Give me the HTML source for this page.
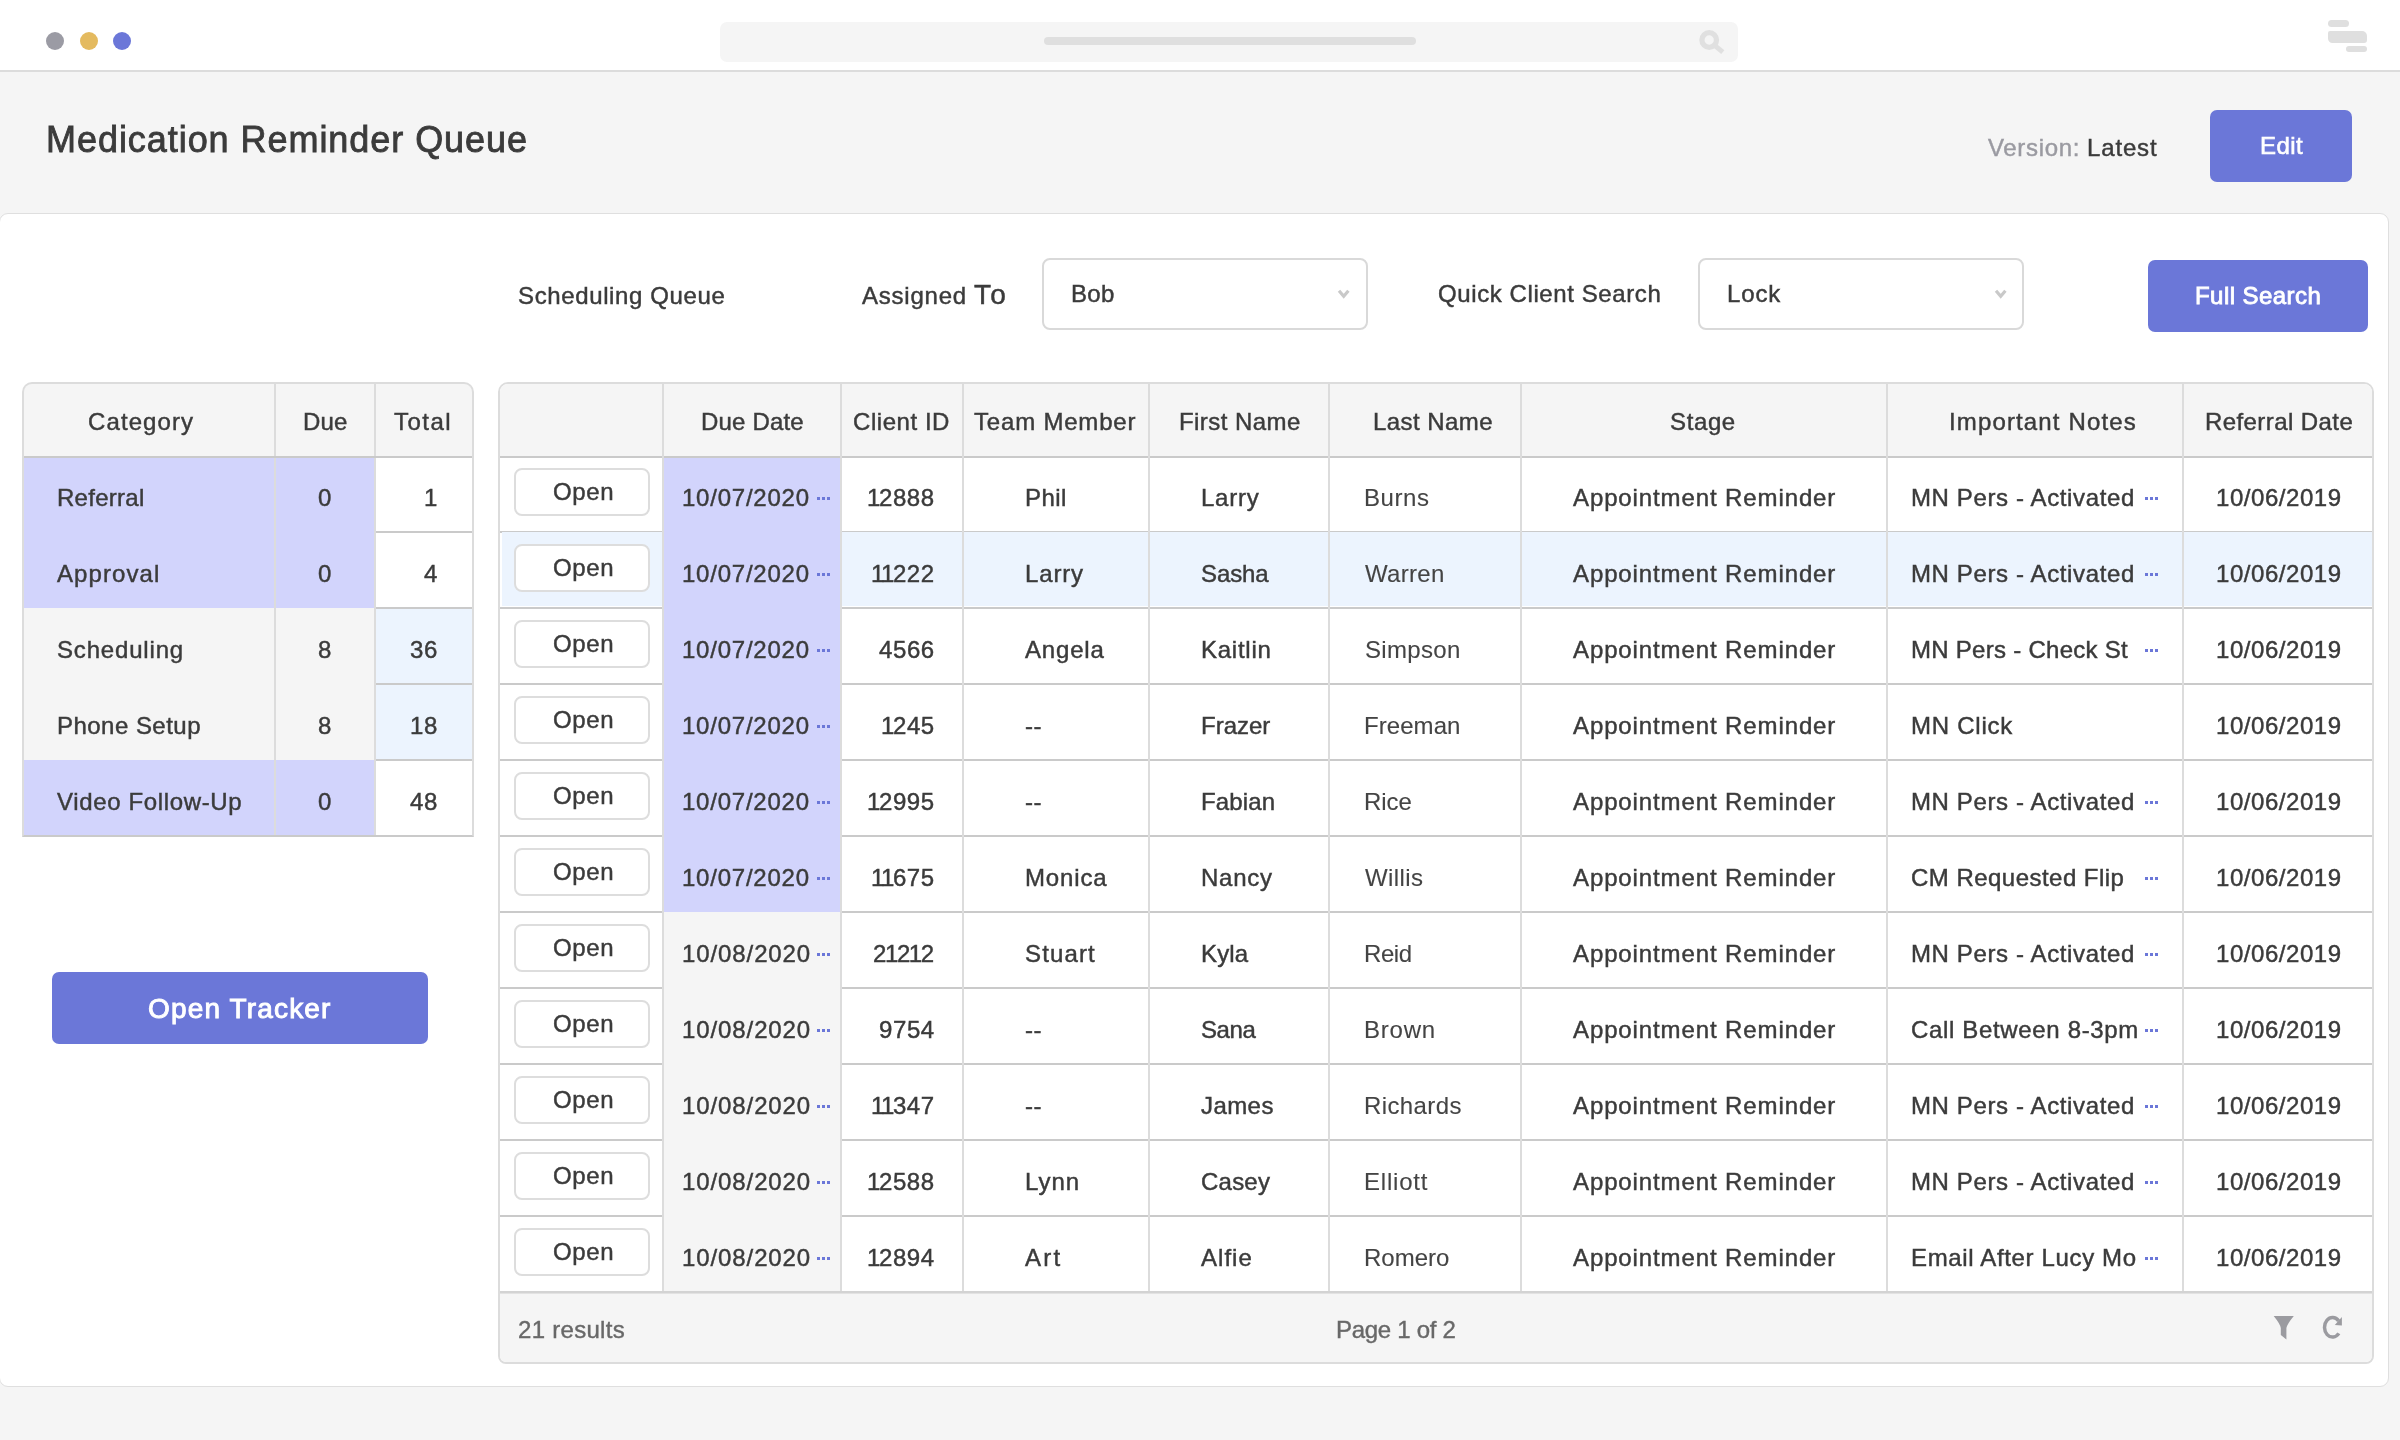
<!DOCTYPE html>
<html><head><meta charset="utf-8"><title>Medication Reminder Queue</title>
<style>
html,body{margin:0;padding:0}
body{width:2400px;height:1440px;position:relative;overflow:hidden;background:#f5f5f5;font-family:"Liberation Sans",sans-serif}
body>div,body>span,body>svg{position:absolute;display:block}
.t{white-space:nowrap;font-weight:400;will-change:transform}
</style></head><body>
<div style="left:0px;top:0px;width:2400px;height:70px;background:#fff;"></div>
<div style="left:0px;top:70px;width:2400px;height:2px;background:#dcdcdc;"></div>
<div style="left:46px;top:32px;width:18px;height:18px;background:#9b9ba4;border-radius:50%;"></div>
<div style="left:79.5px;top:32px;width:18px;height:18px;background:#e4ba5f;border-radius:50%;"></div>
<div style="left:113px;top:32px;width:18px;height:18px;background:#6b77d8;border-radius:50%;"></div>
<div style="left:720px;top:22px;width:1018px;height:40px;background:#f5f5f5;border-radius:7px;"></div>
<div style="left:1044px;top:37px;width:372px;height:8px;background:#dfdfdf;border-radius:4px;"></div>
<svg style="left:1694px;top:26px" width="36" height="32" viewBox="0 0 36 32"><circle cx="15.2" cy="14" r="7.3" fill="none" stroke="#e0e0e0" stroke-width="5.3"/><path d="M20.6 19.4 L28.8 26.2" stroke="#e0e0e0" stroke-width="5" stroke-linecap="butt"/></svg>
<div style="left:2328px;top:20px;width:21px;height:7px;background:#dfdfdf;border-radius:3.5px;"></div>
<div style="left:2328px;top:30.5px;width:38.5px;height:12.5px;background:#dfdfdf;border-radius:2px 5px 3px 4.5px;"></div>
<div style="left:2345.5px;top:46.3px;width:21px;height:5.8px;background:#dfdfdf;border-radius:2.9px;"></div>
<span class="t" style="left:46.00px;top:122px;font-size:36px;line-height:36px;letter-spacing:0.950px;color:#3b3b3b;-webkit-text-stroke:0.85px #3b3b3b;">Medication Reminder Queue</span>
<span class="t" style="left:1988.00px;top:136px;font-size:24px;line-height:24px;letter-spacing:0.657px;color:#9a9aa1;-webkit-text-stroke:0.45px #9a9aa1;">Version:</span>
<span class="t" style="left:2087.20px;top:136px;font-size:24px;line-height:24px;letter-spacing:0.840px;color:#3b3b3b;-webkit-text-stroke:0.45px #3b3b3b;">Latest</span>
<div style="left:2210px;top:110px;width:142px;height:72px;background:#6b77d8;border-radius:7px;"></div>
<span class="t" style="left:2260.10px;top:133.5px;font-size:24px;line-height:24px;letter-spacing:0.433px;color:#fff;-webkit-text-stroke:0.6px #fff;">Edit</span>
<div style="left:-1px;top:213px;width:2388px;height:1172px;background:#fff;border:1px solid #dfdfdf;border-radius:9px;box-sizing:content-box"></div>
<span class="t" style="left:518.40px;top:284.0px;font-size:24px;line-height:24px;letter-spacing:0.627px;color:#3b3b3b;-webkit-text-stroke:0.45px #3b3b3b;">Scheduling Queue</span>
<span class="t" style="left:862.20px;top:284px;font-size:24px;line-height:24px;letter-spacing:0.771px;color:#3b3b3b;-webkit-text-stroke:0.45px #3b3b3b;">Assigned</span>
<span class="t" style="left:973.60px;top:281px;font-size:28px;line-height:28px;letter-spacing:2.200px;color:#3b3b3b;-webkit-text-stroke:0.5px #3b3b3b;">To</span>
<div style="left:1042px;top:258px;width:322px;height:68px;background:#fff;border:2px solid #d9d9d9;border-radius:8px"></div>
<span class="t" style="left:1071.00px;top:282px;font-size:24px;line-height:24px;letter-spacing:0.300px;color:#3b3b3b;-webkit-text-stroke:0.45px #3b3b3b;">Bob</span>
<svg style="left:1336.3px;top:286px" width="16" height="16" viewBox="0 0 16 16"><path d="M3 4.8 L7.7 10.2 L12.4 4.8" fill="none" stroke="#c9c9c9" stroke-width="3.2" stroke-linejoin="miter"/></svg>
<span class="t" style="left:1438.30px;top:282px;font-size:24px;line-height:24px;letter-spacing:0.594px;color:#3b3b3b;-webkit-text-stroke:0.45px #3b3b3b;">Quick Client Search</span>
<div style="left:1698px;top:258px;width:322px;height:68px;background:#fff;border:2px solid #d9d9d9;border-radius:8px"></div>
<span class="t" style="left:1726.90px;top:282px;font-size:24px;line-height:24px;letter-spacing:0.867px;color:#3b3b3b;-webkit-text-stroke:0.45px #3b3b3b;">Lock</span>
<svg style="left:1992.5px;top:286px" width="16" height="16" viewBox="0 0 16 16"><path d="M3 4.8 L7.7 10.2 L12.4 4.8" fill="none" stroke="#c9c9c9" stroke-width="3.2" stroke-linejoin="miter"/></svg>
<div style="left:2148px;top:260px;width:220px;height:72px;background:#6b77d8;border-radius:7px;"></div>
<span class="t" style="left:2195.20px;top:284px;font-size:24px;line-height:24px;letter-spacing:0.440px;color:#fff;-webkit-text-stroke:0.85px #fff;">Full Search</span>
<div style="left:22px;top:382px;width:448px;height:451px;background:#f5f5f5;border:2px solid #dcdcdc;border-bottom:2px solid #cacaca;border-radius:10px 10px 0 0"></div>
<div style="left:24px;top:458px;width:350px;height:150px;background:#d2d4fc;"></div>
<div style="left:24px;top:760px;width:350px;height:75px;background:#d2d4fc;"></div>
<div style="left:376px;top:458px;width:96px;height:73px;background:#fff;"></div>
<div style="left:376px;top:531px;width:96px;height:2px;background:#cacaca;"></div>
<div style="left:376px;top:533px;width:96px;height:74px;background:#fff;"></div>
<div style="left:376px;top:607px;width:96px;height:2px;background:#cacaca;"></div>
<div style="left:376px;top:609px;width:96px;height:74px;background:#ecf4fe;"></div>
<div style="left:376px;top:683px;width:96px;height:2px;background:#cacaca;"></div>
<div style="left:376px;top:685px;width:96px;height:74px;background:#ecf4fe;"></div>
<div style="left:376px;top:759px;width:96px;height:2px;background:#cacaca;"></div>
<div style="left:376px;top:761px;width:96px;height:74px;background:#fff;"></div>
<div style="left:274px;top:384px;width:2px;height:451px;background:#dcdcdc;"></div>
<div style="left:374px;top:384px;width:2px;height:451px;background:#dcdcdc;"></div>
<div style="left:24px;top:456px;width:448px;height:2px;background:#cacaca;"></div>
<span class="t" style="left:88.20px;top:410px;font-size:24px;line-height:24px;letter-spacing:1.100px;color:#3b3b3b;-webkit-text-stroke:0.45px #3b3b3b;">Category</span>
<span class="t" style="left:302.60px;top:410px;font-size:24px;line-height:24px;letter-spacing:0.150px;color:#3b3b3b;-webkit-text-stroke:0.45px #3b3b3b;">Due</span>
<span class="t" style="left:393.60px;top:410px;font-size:24px;line-height:24px;letter-spacing:1.500px;color:#3b3b3b;-webkit-text-stroke:0.45px #3b3b3b;">Total</span>
<span class="t" style="left:56.60px;top:486px;font-size:24px;line-height:24px;letter-spacing:0.271px;color:#3b3b3b;-webkit-text-stroke:0.45px #3b3b3b;">Referral</span>
<span class="t" style="left:318.35px;top:486px;font-size:24px;line-height:24px;letter-spacing:0.620px;color:#3b3b3b;-webkit-text-stroke:0.45px #3b3b3b;">0</span>
<span class="t" style="left:424.00px;top:486px;font-size:24px;line-height:24px;letter-spacing:0.620px;color:#3b3b3b;-webkit-text-stroke:0.45px #3b3b3b;">1</span>
<span class="t" style="left:56.60px;top:562px;font-size:24px;line-height:24px;letter-spacing:1.071px;color:#3b3b3b;-webkit-text-stroke:0.45px #3b3b3b;">Approval</span>
<span class="t" style="left:318.35px;top:562px;font-size:24px;line-height:24px;letter-spacing:0.620px;color:#3b3b3b;-webkit-text-stroke:0.45px #3b3b3b;">0</span>
<span class="t" style="left:424.00px;top:562px;font-size:24px;line-height:24px;letter-spacing:0.620px;color:#3b3b3b;-webkit-text-stroke:0.45px #3b3b3b;">4</span>
<span class="t" style="left:56.60px;top:638px;font-size:24px;line-height:24px;letter-spacing:0.822px;color:#3b3b3b;-webkit-text-stroke:0.45px #3b3b3b;">Scheduling</span>
<span class="t" style="left:318.35px;top:638px;font-size:24px;line-height:24px;letter-spacing:0.620px;color:#3b3b3b;-webkit-text-stroke:0.45px #3b3b3b;">8</span>
<span class="t" style="left:409.98px;top:638px;font-size:24px;line-height:24px;letter-spacing:0.620px;color:#3b3b3b;-webkit-text-stroke:0.45px #3b3b3b;">36</span>
<span class="t" style="left:56.60px;top:714px;font-size:24px;line-height:24px;letter-spacing:0.470px;color:#3b3b3b;-webkit-text-stroke:0.45px #3b3b3b;">Phone Setup</span>
<span class="t" style="left:318.35px;top:714px;font-size:24px;line-height:24px;letter-spacing:0.620px;color:#3b3b3b;-webkit-text-stroke:0.45px #3b3b3b;">8</span>
<span class="t" style="left:409.98px;top:714px;font-size:24px;line-height:24px;letter-spacing:0.620px;color:#3b3b3b;-webkit-text-stroke:0.45px #3b3b3b;">18</span>
<span class="t" style="left:56.60px;top:790px;font-size:24px;line-height:24px;letter-spacing:0.643px;color:#3b3b3b;-webkit-text-stroke:0.45px #3b3b3b;">Video Follow-Up</span>
<span class="t" style="left:318.35px;top:790px;font-size:24px;line-height:24px;letter-spacing:0.620px;color:#3b3b3b;-webkit-text-stroke:0.45px #3b3b3b;">0</span>
<span class="t" style="left:409.98px;top:790px;font-size:24px;line-height:24px;letter-spacing:0.620px;color:#3b3b3b;-webkit-text-stroke:0.45px #3b3b3b;">48</span>
<div style="left:52px;top:972px;width:376px;height:72px;background:#6b77d8;border-radius:7px;"></div>
<span class="t" style="left:148.00px;top:995px;font-size:28px;line-height:28px;letter-spacing:1.155px;color:#fff;-webkit-text-stroke:0.95px #fff;">Open Tracker</span>
<div style="left:498px;top:382px;width:1872px;height:978px;background:#fff;border:2px solid #dcdcdc;border-radius:10px 10px 8px 8px"></div>
<div style="left:500px;top:384px;width:1872px;height:72px;background:#f5f5f5;border-radius:8px 8px 0 0;"></div>
<div style="left:500px;top:456px;width:1872px;height:2px;background:#cacaca;"></div>
<div style="left:500px;top:531px;width:1872px;height:2px;background:#cacaca;"></div>
<div style="left:500px;top:607px;width:1872px;height:2px;background:#cacaca;"></div>
<div style="left:500px;top:683px;width:1872px;height:2px;background:#cacaca;"></div>
<div style="left:500px;top:759px;width:1872px;height:2px;background:#cacaca;"></div>
<div style="left:500px;top:835px;width:1872px;height:2px;background:#cacaca;"></div>
<div style="left:500px;top:911px;width:1872px;height:2px;background:#cacaca;"></div>
<div style="left:500px;top:987px;width:1872px;height:2px;background:#cacaca;"></div>
<div style="left:500px;top:1063px;width:1872px;height:2px;background:#cacaca;"></div>
<div style="left:500px;top:1139px;width:1872px;height:2px;background:#cacaca;"></div>
<div style="left:500px;top:1215px;width:1872px;height:2px;background:#cacaca;"></div>
<div style="left:500px;top:1291px;width:1872px;height:2px;background:#cacaca;"></div>
<div style="left:500px;top:1291px;width:1872px;height:2px;background:#d3d3d3;"></div>
<div style="left:500px;top:1293px;width:1872px;height:1px;background:#e2e2e2;"></div>
<div style="left:502px;top:532px;width:1870px;height:74px;background:#ecf4fe;"></div>
<div style="left:664px;top:458px;width:176px;height:454px;background:#d2d4fc;"></div>
<div style="left:664px;top:912px;width:176px;height:379px;background:#f5f5f5;"></div>
<div style="left:500px;top:1294px;width:1872px;height:68px;background:#f5f5f5;border-radius:0 0 6px 6px;"></div>
<div style="left:662px;top:384px;width:2px;height:907px;background:#dcdcdc;"></div>
<div style="left:840px;top:384px;width:2px;height:907px;background:#dcdcdc;"></div>
<div style="left:962px;top:384px;width:2px;height:907px;background:#dcdcdc;"></div>
<div style="left:1148px;top:384px;width:2px;height:907px;background:#dcdcdc;"></div>
<div style="left:1328px;top:384px;width:2px;height:907px;background:#dcdcdc;"></div>
<div style="left:1520px;top:384px;width:2px;height:907px;background:#dcdcdc;"></div>
<div style="left:1886px;top:384px;width:2px;height:907px;background:#dcdcdc;"></div>
<div style="left:2182px;top:384px;width:2px;height:907px;background:#dcdcdc;"></div>
<span class="t" style="left:700.90px;top:410px;font-size:24px;line-height:24px;letter-spacing:0.186px;color:#3b3b3b;-webkit-text-stroke:0.45px #3b3b3b;">Due Date</span>
<span class="t" style="left:852.60px;top:410px;font-size:24px;line-height:24px;letter-spacing:0.550px;color:#3b3b3b;-webkit-text-stroke:0.45px #3b3b3b;">Client ID</span>
<span class="t" style="left:973.80px;top:410px;font-size:24px;line-height:24px;letter-spacing:0.810px;color:#3b3b3b;-webkit-text-stroke:0.45px #3b3b3b;">Team Member</span>
<span class="t" style="left:1178.80px;top:410px;font-size:24px;line-height:24px;letter-spacing:0.433px;color:#3b3b3b;-webkit-text-stroke:0.45px #3b3b3b;">First Name</span>
<span class="t" style="left:1372.60px;top:410px;font-size:24px;line-height:24px;letter-spacing:0.450px;color:#3b3b3b;-webkit-text-stroke:0.45px #3b3b3b;">Last Name</span>
<span class="t" style="left:1670.40px;top:410px;font-size:24px;line-height:24px;letter-spacing:0.625px;color:#3b3b3b;-webkit-text-stroke:0.45px #3b3b3b;">Stage</span>
<span class="t" style="left:1949.20px;top:410px;font-size:24px;line-height:24px;letter-spacing:1.143px;color:#3b3b3b;-webkit-text-stroke:0.45px #3b3b3b;">Important Notes</span>
<span class="t" style="left:2204.60px;top:410px;font-size:24px;line-height:24px;letter-spacing:0.417px;color:#3b3b3b;-webkit-text-stroke:0.45px #3b3b3b;">Referral Date</span>
<div style="left:514px;top:468px;width:132px;height:44px;background:#fff;border:2px solid #dddddd;border-radius:8px"></div>
<span class="t" style="left:552.60px;top:480px;font-size:24px;line-height:24px;letter-spacing:0.667px;color:#3b3b3b;-webkit-text-stroke:0.45px #3b3b3b;">Open</span>
<span class="t" style="left:681.60px;top:486px;font-size:24px;line-height:24px;letter-spacing:0.767px;color:#3b3b3b;-webkit-text-stroke:0.45px #3b3b3b;">10/07/2020</span>
<div style="left:817px;top:497px;width:3px;height:3px;background:#6b77d8;"></div>
<div style="left:822px;top:497px;width:3px;height:3px;background:#6b77d8;"></div>
<div style="left:827px;top:497px;width:3px;height:3px;background:#6b77d8;"></div>
<span class="t" style="left:868.71px;top:486px;font-size:24px;line-height:24px;letter-spacing:0.6px;color:#3b3b3b;-webkit-text-stroke:0.45px #3b3b3b;"><span style="margin:0 -2.0px">1</span>2888</span>
<span class="t" style="left:1024.60px;top:486px;font-size:24px;line-height:24px;letter-spacing:0.400px;color:#3b3b3b;-webkit-text-stroke:0.45px #3b3b3b;">Phil</span>
<span class="t" style="left:1200.90px;top:486px;font-size:24px;line-height:24px;letter-spacing:0.750px;color:#3b3b3b;-webkit-text-stroke:0.45px #3b3b3b;">Larry</span>
<span class="t" style="left:1363.90px;top:486px;font-size:24px;line-height:24px;letter-spacing:0.550px;color:#444;-webkit-text-stroke:0.1px #444;">Burns</span>
<span class="t" style="left:1572.90px;top:486px;font-size:24px;line-height:24px;letter-spacing:0.889px;color:#3b3b3b;-webkit-text-stroke:0.45px #3b3b3b;">Appointment Reminder</span>
<span class="t" style="left:1910.60px;top:486px;font-size:24px;line-height:24px;letter-spacing:0.622px;color:#3b3b3b;-webkit-text-stroke:0.45px #3b3b3b;">MN Pers - Activated</span>
<div style="left:2145px;top:497px;width:3px;height:3px;background:#6b77d8;"></div>
<div style="left:2150px;top:497px;width:3px;height:3px;background:#6b77d8;"></div>
<div style="left:2155px;top:497px;width:3px;height:3px;background:#6b77d8;"></div>
<span class="t" style="left:2215.60px;top:486px;font-size:24px;line-height:24px;letter-spacing:0.556px;color:#3b3b3b;-webkit-text-stroke:0.45px #3b3b3b;">10/06/2019</span>
<div style="left:514px;top:544px;width:132px;height:44px;background:#fff;border:2px solid #dddddd;border-radius:8px"></div>
<span class="t" style="left:552.60px;top:556px;font-size:24px;line-height:24px;letter-spacing:0.667px;color:#3b3b3b;-webkit-text-stroke:0.45px #3b3b3b;">Open</span>
<span class="t" style="left:681.60px;top:562px;font-size:24px;line-height:24px;letter-spacing:0.767px;color:#3b3b3b;-webkit-text-stroke:0.45px #3b3b3b;">10/07/2020</span>
<div style="left:817px;top:573px;width:3px;height:3px;background:#6b77d8;"></div>
<div style="left:822px;top:573px;width:3px;height:3px;background:#6b77d8;"></div>
<div style="left:827px;top:573px;width:3px;height:3px;background:#6b77d8;"></div>
<span class="t" style="left:872.71px;top:562px;font-size:24px;line-height:24px;letter-spacing:0.6px;color:#3b3b3b;-webkit-text-stroke:0.45px #3b3b3b;"><span style="margin:0 -2.0px">1</span><span style="margin:0 -2.0px">1</span>222</span>
<span class="t" style="left:1024.60px;top:562px;font-size:24px;line-height:24px;letter-spacing:0.850px;color:#3b3b3b;-webkit-text-stroke:0.45px #3b3b3b;">Larry</span>
<span class="t" style="left:1200.90px;top:562px;font-size:24px;line-height:24px;letter-spacing:-0.100px;color:#3b3b3b;-webkit-text-stroke:0.45px #3b3b3b;">Sasha</span>
<span class="t" style="left:1364.90px;top:562px;font-size:24px;line-height:24px;letter-spacing:0.320px;color:#444;-webkit-text-stroke:0.1px #444;">Warren</span>
<span class="t" style="left:1572.90px;top:562px;font-size:24px;line-height:24px;letter-spacing:0.889px;color:#3b3b3b;-webkit-text-stroke:0.45px #3b3b3b;">Appointment Reminder</span>
<span class="t" style="left:1910.60px;top:562px;font-size:24px;line-height:24px;letter-spacing:0.622px;color:#3b3b3b;-webkit-text-stroke:0.45px #3b3b3b;">MN Pers - Activated</span>
<div style="left:2145px;top:573px;width:3px;height:3px;background:#6b77d8;"></div>
<div style="left:2150px;top:573px;width:3px;height:3px;background:#6b77d8;"></div>
<div style="left:2155px;top:573px;width:3px;height:3px;background:#6b77d8;"></div>
<span class="t" style="left:2215.60px;top:562px;font-size:24px;line-height:24px;letter-spacing:0.556px;color:#3b3b3b;-webkit-text-stroke:0.45px #3b3b3b;">10/06/2019</span>
<div style="left:514px;top:620px;width:132px;height:44px;background:#fff;border:2px solid #dddddd;border-radius:8px"></div>
<span class="t" style="left:552.60px;top:632px;font-size:24px;line-height:24px;letter-spacing:0.667px;color:#3b3b3b;-webkit-text-stroke:0.45px #3b3b3b;">Open</span>
<span class="t" style="left:681.60px;top:638px;font-size:24px;line-height:24px;letter-spacing:0.767px;color:#3b3b3b;-webkit-text-stroke:0.45px #3b3b3b;">10/07/2020</span>
<div style="left:817px;top:649px;width:3px;height:3px;background:#6b77d8;"></div>
<div style="left:822px;top:649px;width:3px;height:3px;background:#6b77d8;"></div>
<div style="left:827px;top:649px;width:3px;height:3px;background:#6b77d8;"></div>
<span class="t" style="left:878.65px;top:638px;font-size:24px;line-height:24px;letter-spacing:0.6px;color:#3b3b3b;-webkit-text-stroke:0.45px #3b3b3b;">4566</span>
<span class="t" style="left:1024.60px;top:638px;font-size:24px;line-height:24px;letter-spacing:0.820px;color:#3b3b3b;-webkit-text-stroke:0.45px #3b3b3b;">Angela</span>
<span class="t" style="left:1200.90px;top:638px;font-size:24px;line-height:24px;letter-spacing:0.750px;color:#3b3b3b;-webkit-text-stroke:0.45px #3b3b3b;">Kaitlin</span>
<span class="t" style="left:1364.90px;top:638px;font-size:24px;line-height:24px;letter-spacing:0.333px;color:#444;-webkit-text-stroke:0.1px #444;">Simpson</span>
<span class="t" style="left:1572.90px;top:638px;font-size:24px;line-height:24px;letter-spacing:0.889px;color:#3b3b3b;-webkit-text-stroke:0.45px #3b3b3b;">Appointment Reminder</span>
<span class="t" style="left:1910.60px;top:638px;font-size:24px;line-height:24px;letter-spacing:0.276px;color:#3b3b3b;-webkit-text-stroke:0.45px #3b3b3b;">MN Pers - Check St</span>
<div style="left:2145px;top:649px;width:3px;height:3px;background:#6b77d8;"></div>
<div style="left:2150px;top:649px;width:3px;height:3px;background:#6b77d8;"></div>
<div style="left:2155px;top:649px;width:3px;height:3px;background:#6b77d8;"></div>
<span class="t" style="left:2215.60px;top:638px;font-size:24px;line-height:24px;letter-spacing:0.556px;color:#3b3b3b;-webkit-text-stroke:0.45px #3b3b3b;">10/06/2019</span>
<div style="left:514px;top:696px;width:132px;height:44px;background:#fff;border:2px solid #dddddd;border-radius:8px"></div>
<span class="t" style="left:552.60px;top:708px;font-size:24px;line-height:24px;letter-spacing:0.667px;color:#3b3b3b;-webkit-text-stroke:0.45px #3b3b3b;">Open</span>
<span class="t" style="left:681.60px;top:714px;font-size:24px;line-height:24px;letter-spacing:0.767px;color:#3b3b3b;-webkit-text-stroke:0.45px #3b3b3b;">10/07/2020</span>
<div style="left:817px;top:725px;width:3px;height:3px;background:#6b77d8;"></div>
<div style="left:822px;top:725px;width:3px;height:3px;background:#6b77d8;"></div>
<div style="left:827px;top:725px;width:3px;height:3px;background:#6b77d8;"></div>
<span class="t" style="left:882.65px;top:714px;font-size:24px;line-height:24px;letter-spacing:0.6px;color:#3b3b3b;-webkit-text-stroke:0.45px #3b3b3b;"><span style="margin:0 -2.0px">1</span>245</span>
<span class="t" style="left:1024.60px;top:714px;font-size:24px;line-height:24px;letter-spacing:0.500px;color:#3b3b3b;-webkit-text-stroke:0.45px #3b3b3b;">--</span>
<span class="t" style="left:1200.90px;top:714px;font-size:24px;line-height:24px;letter-spacing:0.000px;color:#3b3b3b;-webkit-text-stroke:0.45px #3b3b3b;">Frazer</span>
<span class="t" style="left:1363.90px;top:714px;font-size:24px;line-height:24px;letter-spacing:0.067px;color:#444;-webkit-text-stroke:0.1px #444;">Freeman</span>
<span class="t" style="left:1572.90px;top:714px;font-size:24px;line-height:24px;letter-spacing:0.889px;color:#3b3b3b;-webkit-text-stroke:0.45px #3b3b3b;">Appointment Reminder</span>
<span class="t" style="left:1910.60px;top:714px;font-size:24px;line-height:24px;letter-spacing:0.757px;color:#3b3b3b;-webkit-text-stroke:0.45px #3b3b3b;">MN Click</span>
<span class="t" style="left:2215.60px;top:714px;font-size:24px;line-height:24px;letter-spacing:0.556px;color:#3b3b3b;-webkit-text-stroke:0.45px #3b3b3b;">10/06/2019</span>
<div style="left:514px;top:772px;width:132px;height:44px;background:#fff;border:2px solid #dddddd;border-radius:8px"></div>
<span class="t" style="left:552.60px;top:784px;font-size:24px;line-height:24px;letter-spacing:0.667px;color:#3b3b3b;-webkit-text-stroke:0.45px #3b3b3b;">Open</span>
<span class="t" style="left:681.60px;top:790px;font-size:24px;line-height:24px;letter-spacing:0.767px;color:#3b3b3b;-webkit-text-stroke:0.45px #3b3b3b;">10/07/2020</span>
<div style="left:817px;top:801px;width:3px;height:3px;background:#6b77d8;"></div>
<div style="left:822px;top:801px;width:3px;height:3px;background:#6b77d8;"></div>
<div style="left:827px;top:801px;width:3px;height:3px;background:#6b77d8;"></div>
<span class="t" style="left:868.71px;top:790px;font-size:24px;line-height:24px;letter-spacing:0.6px;color:#3b3b3b;-webkit-text-stroke:0.45px #3b3b3b;"><span style="margin:0 -2.0px">1</span>2995</span>
<span class="t" style="left:1024.60px;top:790px;font-size:24px;line-height:24px;letter-spacing:0.500px;color:#3b3b3b;-webkit-text-stroke:0.45px #3b3b3b;">--</span>
<span class="t" style="left:1200.90px;top:790px;font-size:24px;line-height:24px;letter-spacing:0.140px;color:#3b3b3b;-webkit-text-stroke:0.45px #3b3b3b;">Fabian</span>
<span class="t" style="left:1363.90px;top:790px;font-size:24px;line-height:24px;letter-spacing:-0.067px;color:#444;-webkit-text-stroke:0.1px #444;">Rice</span>
<span class="t" style="left:1572.90px;top:790px;font-size:24px;line-height:24px;letter-spacing:0.889px;color:#3b3b3b;-webkit-text-stroke:0.45px #3b3b3b;">Appointment Reminder</span>
<span class="t" style="left:1910.60px;top:790px;font-size:24px;line-height:24px;letter-spacing:0.622px;color:#3b3b3b;-webkit-text-stroke:0.45px #3b3b3b;">MN Pers - Activated</span>
<div style="left:2145px;top:801px;width:3px;height:3px;background:#6b77d8;"></div>
<div style="left:2150px;top:801px;width:3px;height:3px;background:#6b77d8;"></div>
<div style="left:2155px;top:801px;width:3px;height:3px;background:#6b77d8;"></div>
<span class="t" style="left:2215.60px;top:790px;font-size:24px;line-height:24px;letter-spacing:0.556px;color:#3b3b3b;-webkit-text-stroke:0.45px #3b3b3b;">10/06/2019</span>
<div style="left:514px;top:848px;width:132px;height:44px;background:#fff;border:2px solid #dddddd;border-radius:8px"></div>
<span class="t" style="left:552.60px;top:860px;font-size:24px;line-height:24px;letter-spacing:0.667px;color:#3b3b3b;-webkit-text-stroke:0.45px #3b3b3b;">Open</span>
<span class="t" style="left:681.60px;top:866px;font-size:24px;line-height:24px;letter-spacing:0.767px;color:#3b3b3b;-webkit-text-stroke:0.45px #3b3b3b;">10/07/2020</span>
<div style="left:817px;top:877px;width:3px;height:3px;background:#6b77d8;"></div>
<div style="left:822px;top:877px;width:3px;height:3px;background:#6b77d8;"></div>
<div style="left:827px;top:877px;width:3px;height:3px;background:#6b77d8;"></div>
<span class="t" style="left:872.71px;top:866px;font-size:24px;line-height:24px;letter-spacing:0.6px;color:#3b3b3b;-webkit-text-stroke:0.45px #3b3b3b;"><span style="margin:0 -2.0px">1</span><span style="margin:0 -2.0px">1</span>675</span>
<span class="t" style="left:1024.60px;top:866px;font-size:24px;line-height:24px;letter-spacing:0.860px;color:#3b3b3b;-webkit-text-stroke:0.45px #3b3b3b;">Monica</span>
<span class="t" style="left:1200.90px;top:866px;font-size:24px;line-height:24px;letter-spacing:0.725px;color:#3b3b3b;-webkit-text-stroke:0.45px #3b3b3b;">Nancy</span>
<span class="t" style="left:1364.90px;top:866px;font-size:24px;line-height:24px;letter-spacing:0.380px;color:#444;-webkit-text-stroke:0.1px #444;">Willis</span>
<span class="t" style="left:1572.90px;top:866px;font-size:24px;line-height:24px;letter-spacing:0.889px;color:#3b3b3b;-webkit-text-stroke:0.45px #3b3b3b;">Appointment Reminder</span>
<span class="t" style="left:1910.60px;top:866px;font-size:24px;line-height:24px;letter-spacing:0.469px;color:#3b3b3b;-webkit-text-stroke:0.45px #3b3b3b;">CM Requested Flip</span>
<div style="left:2145px;top:877px;width:3px;height:3px;background:#6b77d8;"></div>
<div style="left:2150px;top:877px;width:3px;height:3px;background:#6b77d8;"></div>
<div style="left:2155px;top:877px;width:3px;height:3px;background:#6b77d8;"></div>
<span class="t" style="left:2215.60px;top:866px;font-size:24px;line-height:24px;letter-spacing:0.556px;color:#3b3b3b;-webkit-text-stroke:0.45px #3b3b3b;">10/06/2019</span>
<div style="left:514px;top:924px;width:132px;height:44px;background:#fff;border:2px solid #dddddd;border-radius:8px"></div>
<span class="t" style="left:552.60px;top:936px;font-size:24px;line-height:24px;letter-spacing:0.667px;color:#3b3b3b;-webkit-text-stroke:0.45px #3b3b3b;">Open</span>
<span class="t" style="left:681.60px;top:942px;font-size:24px;line-height:24px;letter-spacing:0.900px;color:#3b3b3b;-webkit-text-stroke:0.45px #3b3b3b;">10/08/2020</span>
<div style="left:817px;top:953px;width:3px;height:3px;background:#6b77d8;"></div>
<div style="left:822px;top:953px;width:3px;height:3px;background:#6b77d8;"></div>
<div style="left:827px;top:953px;width:3px;height:3px;background:#6b77d8;"></div>
<span class="t" style="left:872.71px;top:942px;font-size:24px;line-height:24px;letter-spacing:0.6px;color:#3b3b3b;-webkit-text-stroke:0.45px #3b3b3b;">2<span style="margin:0 -2.0px">1</span>2<span style="margin:0 -2.0px">1</span>2</span>
<span class="t" style="left:1024.60px;top:942px;font-size:24px;line-height:24px;letter-spacing:1.140px;color:#3b3b3b;-webkit-text-stroke:0.45px #3b3b3b;">Stuart</span>
<span class="t" style="left:1200.90px;top:942px;font-size:24px;line-height:24px;letter-spacing:0.167px;color:#3b3b3b;-webkit-text-stroke:0.45px #3b3b3b;">Kyla</span>
<span class="t" style="left:1363.90px;top:942px;font-size:24px;line-height:24px;letter-spacing:-0.433px;color:#444;-webkit-text-stroke:0.1px #444;">Reid</span>
<span class="t" style="left:1572.90px;top:942px;font-size:24px;line-height:24px;letter-spacing:0.889px;color:#3b3b3b;-webkit-text-stroke:0.45px #3b3b3b;">Appointment Reminder</span>
<span class="t" style="left:1910.60px;top:942px;font-size:24px;line-height:24px;letter-spacing:0.622px;color:#3b3b3b;-webkit-text-stroke:0.45px #3b3b3b;">MN Pers - Activated</span>
<div style="left:2145px;top:953px;width:3px;height:3px;background:#6b77d8;"></div>
<div style="left:2150px;top:953px;width:3px;height:3px;background:#6b77d8;"></div>
<div style="left:2155px;top:953px;width:3px;height:3px;background:#6b77d8;"></div>
<span class="t" style="left:2215.60px;top:942px;font-size:24px;line-height:24px;letter-spacing:0.556px;color:#3b3b3b;-webkit-text-stroke:0.45px #3b3b3b;">10/06/2019</span>
<div style="left:514px;top:1000px;width:132px;height:44px;background:#fff;border:2px solid #dddddd;border-radius:8px"></div>
<span class="t" style="left:552.60px;top:1012px;font-size:24px;line-height:24px;letter-spacing:0.667px;color:#3b3b3b;-webkit-text-stroke:0.45px #3b3b3b;">Open</span>
<span class="t" style="left:681.60px;top:1018px;font-size:24px;line-height:24px;letter-spacing:0.900px;color:#3b3b3b;-webkit-text-stroke:0.45px #3b3b3b;">10/08/2020</span>
<div style="left:817px;top:1029px;width:3px;height:3px;background:#6b77d8;"></div>
<div style="left:822px;top:1029px;width:3px;height:3px;background:#6b77d8;"></div>
<div style="left:827px;top:1029px;width:3px;height:3px;background:#6b77d8;"></div>
<span class="t" style="left:878.65px;top:1018px;font-size:24px;line-height:24px;letter-spacing:0.6px;color:#3b3b3b;-webkit-text-stroke:0.45px #3b3b3b;">9754</span>
<span class="t" style="left:1024.60px;top:1018px;font-size:24px;line-height:24px;letter-spacing:0.500px;color:#3b3b3b;-webkit-text-stroke:0.45px #3b3b3b;">--</span>
<span class="t" style="left:1200.90px;top:1018px;font-size:24px;line-height:24px;letter-spacing:-0.433px;color:#3b3b3b;-webkit-text-stroke:0.45px #3b3b3b;">Sana</span>
<span class="t" style="left:1363.90px;top:1018px;font-size:24px;line-height:24px;letter-spacing:0.775px;color:#444;-webkit-text-stroke:0.1px #444;">Brown</span>
<span class="t" style="left:1572.90px;top:1018px;font-size:24px;line-height:24px;letter-spacing:0.889px;color:#3b3b3b;-webkit-text-stroke:0.45px #3b3b3b;">Appointment Reminder</span>
<span class="t" style="left:1910.60px;top:1018px;font-size:24px;line-height:24px;letter-spacing:0.659px;color:#3b3b3b;-webkit-text-stroke:0.45px #3b3b3b;">Call Between 8-3pm</span>
<div style="left:2145px;top:1029px;width:3px;height:3px;background:#6b77d8;"></div>
<div style="left:2150px;top:1029px;width:3px;height:3px;background:#6b77d8;"></div>
<div style="left:2155px;top:1029px;width:3px;height:3px;background:#6b77d8;"></div>
<span class="t" style="left:2215.60px;top:1018px;font-size:24px;line-height:24px;letter-spacing:0.556px;color:#3b3b3b;-webkit-text-stroke:0.45px #3b3b3b;">10/06/2019</span>
<div style="left:514px;top:1076px;width:132px;height:44px;background:#fff;border:2px solid #dddddd;border-radius:8px"></div>
<span class="t" style="left:552.60px;top:1088px;font-size:24px;line-height:24px;letter-spacing:0.667px;color:#3b3b3b;-webkit-text-stroke:0.45px #3b3b3b;">Open</span>
<span class="t" style="left:681.60px;top:1094px;font-size:24px;line-height:24px;letter-spacing:0.900px;color:#3b3b3b;-webkit-text-stroke:0.45px #3b3b3b;">10/08/2020</span>
<div style="left:817px;top:1105px;width:3px;height:3px;background:#6b77d8;"></div>
<div style="left:822px;top:1105px;width:3px;height:3px;background:#6b77d8;"></div>
<div style="left:827px;top:1105px;width:3px;height:3px;background:#6b77d8;"></div>
<span class="t" style="left:872.71px;top:1094px;font-size:24px;line-height:24px;letter-spacing:0.6px;color:#3b3b3b;-webkit-text-stroke:0.45px #3b3b3b;"><span style="margin:0 -2.0px">1</span><span style="margin:0 -2.0px">1</span>347</span>
<span class="t" style="left:1024.60px;top:1094px;font-size:24px;line-height:24px;letter-spacing:0.500px;color:#3b3b3b;-webkit-text-stroke:0.45px #3b3b3b;">--</span>
<span class="t" style="left:1200.90px;top:1094px;font-size:24px;line-height:24px;letter-spacing:0.425px;color:#3b3b3b;-webkit-text-stroke:0.45px #3b3b3b;">James</span>
<span class="t" style="left:1363.90px;top:1094px;font-size:24px;line-height:24px;letter-spacing:0.386px;color:#444;-webkit-text-stroke:0.1px #444;">Richards</span>
<span class="t" style="left:1572.90px;top:1094px;font-size:24px;line-height:24px;letter-spacing:0.889px;color:#3b3b3b;-webkit-text-stroke:0.45px #3b3b3b;">Appointment Reminder</span>
<span class="t" style="left:1910.60px;top:1094px;font-size:24px;line-height:24px;letter-spacing:0.622px;color:#3b3b3b;-webkit-text-stroke:0.45px #3b3b3b;">MN Pers - Activated</span>
<div style="left:2145px;top:1105px;width:3px;height:3px;background:#6b77d8;"></div>
<div style="left:2150px;top:1105px;width:3px;height:3px;background:#6b77d8;"></div>
<div style="left:2155px;top:1105px;width:3px;height:3px;background:#6b77d8;"></div>
<span class="t" style="left:2215.60px;top:1094px;font-size:24px;line-height:24px;letter-spacing:0.556px;color:#3b3b3b;-webkit-text-stroke:0.45px #3b3b3b;">10/06/2019</span>
<div style="left:514px;top:1152px;width:132px;height:44px;background:#fff;border:2px solid #dddddd;border-radius:8px"></div>
<span class="t" style="left:552.60px;top:1164px;font-size:24px;line-height:24px;letter-spacing:0.667px;color:#3b3b3b;-webkit-text-stroke:0.45px #3b3b3b;">Open</span>
<span class="t" style="left:681.60px;top:1170px;font-size:24px;line-height:24px;letter-spacing:0.900px;color:#3b3b3b;-webkit-text-stroke:0.45px #3b3b3b;">10/08/2020</span>
<div style="left:817px;top:1181px;width:3px;height:3px;background:#6b77d8;"></div>
<div style="left:822px;top:1181px;width:3px;height:3px;background:#6b77d8;"></div>
<div style="left:827px;top:1181px;width:3px;height:3px;background:#6b77d8;"></div>
<span class="t" style="left:868.71px;top:1170px;font-size:24px;line-height:24px;letter-spacing:0.6px;color:#3b3b3b;-webkit-text-stroke:0.45px #3b3b3b;"><span style="margin:0 -2.0px">1</span>2588</span>
<span class="t" style="left:1024.60px;top:1170px;font-size:24px;line-height:24px;letter-spacing:1.000px;color:#3b3b3b;-webkit-text-stroke:0.45px #3b3b3b;">Lynn</span>
<span class="t" style="left:1200.90px;top:1170px;font-size:24px;line-height:24px;letter-spacing:0.225px;color:#3b3b3b;-webkit-text-stroke:0.45px #3b3b3b;">Casey</span>
<span class="t" style="left:1363.90px;top:1170px;font-size:24px;line-height:24px;letter-spacing:0.800px;color:#444;-webkit-text-stroke:0.1px #444;">Elliott</span>
<span class="t" style="left:1572.90px;top:1170px;font-size:24px;line-height:24px;letter-spacing:0.889px;color:#3b3b3b;-webkit-text-stroke:0.45px #3b3b3b;">Appointment Reminder</span>
<span class="t" style="left:1910.60px;top:1170px;font-size:24px;line-height:24px;letter-spacing:0.622px;color:#3b3b3b;-webkit-text-stroke:0.45px #3b3b3b;">MN Pers - Activated</span>
<div style="left:2145px;top:1181px;width:3px;height:3px;background:#6b77d8;"></div>
<div style="left:2150px;top:1181px;width:3px;height:3px;background:#6b77d8;"></div>
<div style="left:2155px;top:1181px;width:3px;height:3px;background:#6b77d8;"></div>
<span class="t" style="left:2215.60px;top:1170px;font-size:24px;line-height:24px;letter-spacing:0.556px;color:#3b3b3b;-webkit-text-stroke:0.45px #3b3b3b;">10/06/2019</span>
<div style="left:514px;top:1228px;width:132px;height:44px;background:#fff;border:2px solid #dddddd;border-radius:8px"></div>
<span class="t" style="left:552.60px;top:1240px;font-size:24px;line-height:24px;letter-spacing:0.667px;color:#3b3b3b;-webkit-text-stroke:0.45px #3b3b3b;">Open</span>
<span class="t" style="left:681.60px;top:1246px;font-size:24px;line-height:24px;letter-spacing:0.900px;color:#3b3b3b;-webkit-text-stroke:0.45px #3b3b3b;">10/08/2020</span>
<div style="left:817px;top:1257px;width:3px;height:3px;background:#6b77d8;"></div>
<div style="left:822px;top:1257px;width:3px;height:3px;background:#6b77d8;"></div>
<div style="left:827px;top:1257px;width:3px;height:3px;background:#6b77d8;"></div>
<span class="t" style="left:868.71px;top:1246px;font-size:24px;line-height:24px;letter-spacing:0.6px;color:#3b3b3b;-webkit-text-stroke:0.45px #3b3b3b;"><span style="margin:0 -2.0px">1</span>2894</span>
<span class="t" style="left:1024.60px;top:1246px;font-size:24px;line-height:24px;letter-spacing:2.300px;color:#3b3b3b;-webkit-text-stroke:0.45px #3b3b3b;">Art</span>
<span class="t" style="left:1200.90px;top:1246px;font-size:24px;line-height:24px;letter-spacing:1.025px;color:#3b3b3b;-webkit-text-stroke:0.45px #3b3b3b;">Alfie</span>
<span class="t" style="left:1363.90px;top:1246px;font-size:24px;line-height:24px;letter-spacing:0.000px;color:#444;-webkit-text-stroke:0.1px #444;">Romero</span>
<span class="t" style="left:1572.90px;top:1246px;font-size:24px;line-height:24px;letter-spacing:0.889px;color:#3b3b3b;-webkit-text-stroke:0.45px #3b3b3b;">Appointment Reminder</span>
<span class="t" style="left:1910.60px;top:1246px;font-size:24px;line-height:24px;letter-spacing:0.650px;color:#3b3b3b;-webkit-text-stroke:0.45px #3b3b3b;">Email After Lucy Mo</span>
<div style="left:2145px;top:1257px;width:3px;height:3px;background:#6b77d8;"></div>
<div style="left:2150px;top:1257px;width:3px;height:3px;background:#6b77d8;"></div>
<div style="left:2155px;top:1257px;width:3px;height:3px;background:#6b77d8;"></div>
<span class="t" style="left:2215.60px;top:1246px;font-size:24px;line-height:24px;letter-spacing:0.556px;color:#3b3b3b;-webkit-text-stroke:0.45px #3b3b3b;">10/06/2019</span>
<span class="t" style="left:518.10px;top:1318px;font-size:24px;line-height:24px;letter-spacing:0.289px;color:#686868;-webkit-text-stroke:0.4px #686868;">21 results</span>
<span class="t" style="left:1335.90px;top:1318px;font-size:24px;line-height:24px;letter-spacing:-0.290px;color:#686868;-webkit-text-stroke:0.4px #686868;">Page 1 of 2</span>
<svg style="left:2270px;top:1312px" width="28" height="32" viewBox="0 0 28 32"><path d="M3.7 4 L23.8 4 Q17.2 12 16.4 16 L16.4 27.4 L10.8 23 L10.8 16 Q10.2 12 3.7 4 Z" fill="#9b9ba0"/></svg>
<svg style="left:2318px;top:1312px" width="30" height="32" viewBox="0 0 30 32"><path d="M20.6 8.9 A8.05 9.75 0 1 0 20.84 21.4" fill="none" stroke="#9b9ba0" stroke-width="3.5"/><path d="M23.9 5.1 L23.9 13.4 L16.8 13.0 Z" fill="#9b9ba0"/></svg>
</body></html>
